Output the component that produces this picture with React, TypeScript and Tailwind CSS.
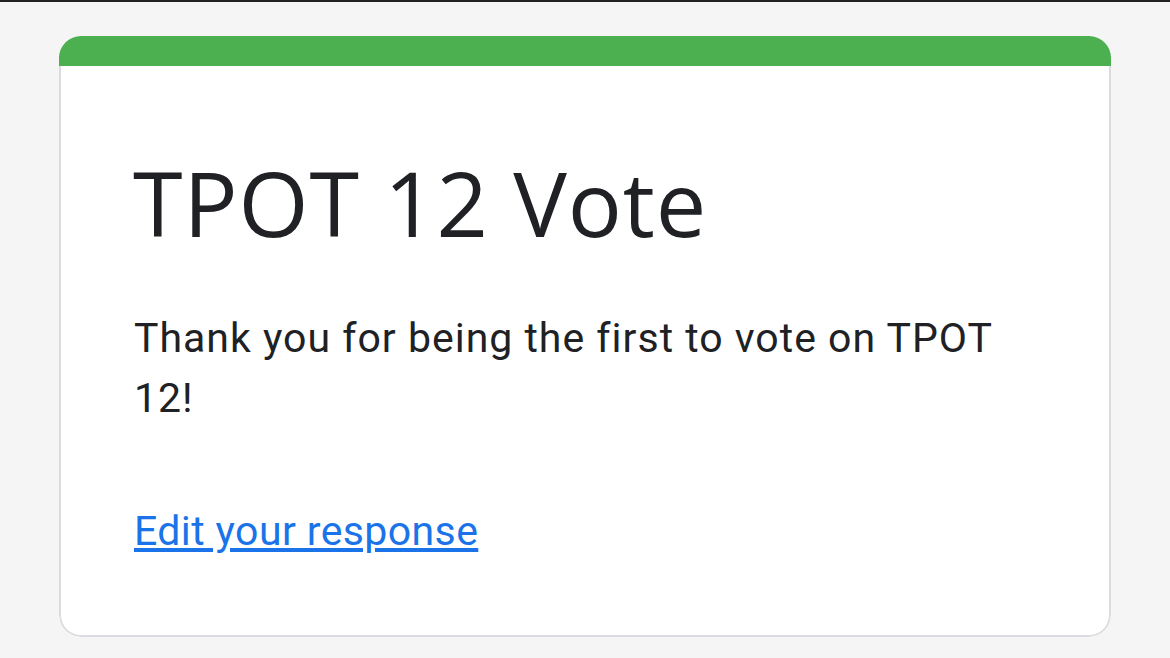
import React from "react";

const App: React.FC = () => {
  return (
    <div className="min-h-[658px] w-full bg-[#f5f5f5] border-t-2 border-[#222222] pt-[34px]">
      <div className="mx-[59px] rounded-[22px] overflow-hidden bg-white">
        {/* green header bar */}
        <div className="h-[30px] bg-[#4caf50]"></div>

        <div className="border-x-2 border-b-2 border-[#dadce0] rounded-b-[22px] pl-[73px] pr-[72px] pt-[86px] pb-[74px]">
          <h1
            className="text-[90px] leading-[100px] tracking-[0.9px] text-[#202124] font-normal -ml-[1px]"
            style={{ fontFamily: '"Open Sans", sans-serif' }}
          >
            TPOT 12 Vote
          </h1>

          <p
            className="mt-[56px] text-[41px] leading-[60px] tracking-[1px] text-[#202124]"
            style={{ fontFamily: "Roboto, sans-serif" }}
          >
            Thank you for being the first to vote on TPOT 12!
          </p>

          <a
            href="#"
            className="block mt-[73px] text-[41px] leading-[60px] tracking-[0.4px] text-[#1a73e8] underline w-fit"
            style={{ fontFamily: "Roboto, sans-serif" }}
          >
            Edit your response
          </a>
        </div>
      </div>
    </div>
  );
};

export default App;
